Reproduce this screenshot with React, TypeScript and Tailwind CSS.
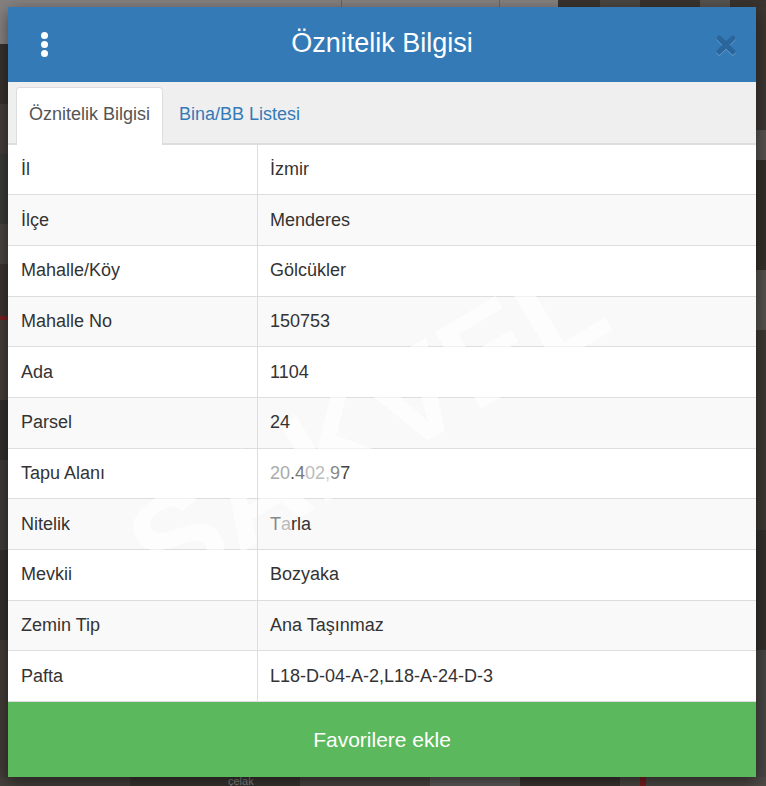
import { FaTimes } from 'react-icons/fa'

const ROWS = [
  ['İl', 'İzmir'],
  ['İlçe', 'Menderes'],
  ['Mahalle/Köy', 'Gölcükler'],
  ['Mahalle No', '150753'],
  ['Ada', '1104'],
  ['Parsel', '24'],
  ['Tapu Alanı', '20.402,97'],
  ['Nitelik', 'Tarla'],
  ['Mevkii', 'Bozyaka'],
  ['Zemin Tip', 'Ana Taşınmaz'],
  ['Pafta', 'L18-D-04-A-2,L18-A-24-D-3'],
]

// letters washed out by the watermark running over them
const FADED: Record<string, string[]> = {
  '20.402,97': ['#aaa', '#aaa', '#555', '#777', '#bbb', '#bbb', '#ccc', '#888', '#444'],
  Tarla: ['#888', '#bbb', '#333', '#333', '#333'],
}

// satellite map behind the dialog, only the edges show
const PATCHES = [
  [0, 44, 8, 60, '#37312d'], [0, 104, 8, 50, '#443e3a'], [0, 154, 8, 70, '#3a3a38'],
  [0, 224, 8, 40, '#4a4541'], [0, 264, 8, 52, '#3b3531'], [0, 316, 8, 4, '#7a2020'],
  [0, 320, 8, 80, '#453e39'], [0, 400, 8, 60, '#332e2b'], [0, 460, 8, 90, '#3e3c38'],
  [0, 550, 8, 90, '#332f2c'], [0, 640, 8, 146, '#423c38'],
  [756, 0, 10, 130, '#3c3632'], [756, 130, 10, 30, '#55514e'], [756, 160, 10, 110, '#352f2b'],
  [756, 270, 10, 60, '#55514d'], [756, 330, 10, 200, '#3f3833'], [756, 530, 10, 120, '#332f2c'],
  [756, 650, 10, 136, '#484644'],
  [558, 0, 208, 7, '#3a332e'], [600, 0, 40, 7, '#4a4540'], [700, 0, 30, 7, '#57534f'],
  [0, 777, 130, 9, '#45403c'], [130, 777, 170, 9, '#3a3531'], [300, 777, 130, 9, '#4a4642'],
  [430, 777, 90, 9, '#5f5d5b'], [520, 777, 100, 9, '#3c3532'], [620, 777, 146, 9, '#4e4a46'],
  [640, 777, 6, 9, '#7a2020'],
] as const

function MapBackdrop() {
  return (
    <svg className="absolute inset-0" width="766" height="786" viewBox="0 0 766 786">
      <rect width="766" height="786" fill="#3c3532" />
      {PATCHES.map(([x, y, w, h, fill], i) => (
        <rect key={i} x={x} y={y} width={w} height={h} fill={fill} />
      ))}
      <rect x="0" y="0" width="558" height="7" fill="#858180" />
      <rect x="0" y="0" width="8" height="44" fill="#858180" />
      <rect x="341" y="0" width="1" height="7" fill="#666" />
      <rect x="499" y="0" width="1" height="7" fill="#666" />
      <text x="228" y="785" fill="#8d8a87" fontSize="11" fontFamily="'Liberation Sans', sans-serif">çelak</text>
    </svg>
  )
}

export default function App() {
  return (
    <div className="relative h-[786px] w-[766px] overflow-hidden font-['Liberation_Sans',Arial,sans-serif] text-[18px] text-[#333]">
      <MapBackdrop />

      <div className="relative ml-2 flex h-[770px] w-[748px] translate-y-[7px] flex-col bg-white shadow-[0_5px_15px_rgba(0,0,0,0.5)]">
        {/* Header */}
        <div className="flex h-[75px] shrink-0 items-center justify-between bg-[#337ab7] pr-5 pl-[33px] text-white">
          <div className="flex flex-col gap-[2px]">
            <span className="h-[7px] w-[7px] rounded-full bg-white" />
            <span className="h-[7px] w-[7px] rounded-full bg-white" />
            <span className="h-[7px] w-[7px] rounded-full bg-white" />
          </div>
          <h4 className="-mt-[2px] text-[27px] leading-none">Öznitelik Bilgisi</h4>
          <FaTimes className="mt-[1px] h-[28px] w-[20px] text-[#2a659b] drop-shadow-[0_1px_0_rgba(255,255,255,0.25)]" />
        </div>

        {/* Tabs */}
        <div className="flex h-[62.5px] shrink-0 items-end border-b-2 border-[#ddd] bg-[#efefef] pl-2">
          <div className="-mb-[2px] flex h-[58px] items-center rounded-t border border-b-0 border-[#ddd] bg-white px-3 pb-[3px] text-[#555]">
            Öznitelik Bilgisi
          </div>
          <div className="-mb-[2px] flex h-[58px] items-center pb-[3px] pl-4 text-[#337ab7]">Bina/BB Listesi</div>
        </div>

        {/* Attribute table */}
        <div className="relative flex-1">
          {ROWS.map(([label, value], i) => (
            <div
              key={label}
              className={`grid h-[50.68px] grid-cols-[250px_1fr] items-stretch border-b border-[#ddd] last:border-b-0 ${i % 2 ? 'bg-[#f9f9f9]' : 'bg-white'}`}
            >
              <div className="relative z-10 flex items-center border-r border-[#ddd] pl-[13px]">{label}</div>
              <div className="relative z-10 flex items-center pl-3">
                {FADED[value]
                  ? value.split('').map((ch, j) => (
                      <span key={j} style={{ color: FADED[value][j] }}>
                        {ch}
                      </span>
                    ))
                  : value}
              </div>
            </div>
          ))}
          {/* faint watermark, only shows on the striped rows */}
          <div
            aria-hidden
            className="pointer-events-none absolute top-[215px] left-[95px] -rotate-[31deg] text-[130px] leading-none font-bold whitespace-nowrap text-white/60"
          >
            SAKVEL
          </div>
        </div>

        {/* Footer action */}
        <button className="flex h-[75px] shrink-0 items-center justify-center bg-[#5cb85c] text-[21px] text-white">
          Favorilere ekle
        </button>
      </div>
    </div>
  )
}
